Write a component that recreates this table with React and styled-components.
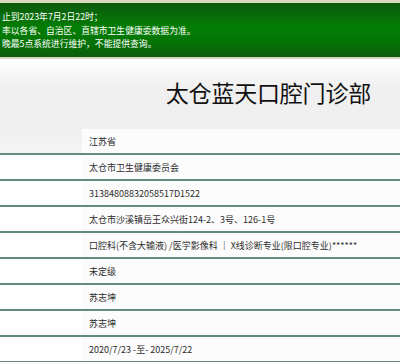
import styled, { createGlobalStyle } from "styled-components";

const Global = createGlobalStyle`
  body {
    margin: 0;
    background: #fff;
    font-family: "Noto Sans CJK SC", "Liberation Sans", sans-serif;
    color: #2b2b2b;
  }
`;

const Page = styled.div`
  width: 400px;
  overflow: hidden;
`;

const Notice = styled.div`
  height: 47px;
  border-top: 3px solid #d9d7bd;
  border-bottom: 2px solid #d9d7bd;
  background: linear-gradient(#0c590c, #047e04 45%, #067306 75%, #0f5b0f);
  padding: 7px 0 0 2px;
`;

const NoticeLine = styled.div`
  color: #fff;
  font-size: 8.8px;
  line-height: 13.6px;
  white-space: nowrap;
`;

const Head = styled.div`
  margin-top: 1px;
  background: linear-gradient(#fff 0px, #f7f7f7 12px, #efefef 30px, #f0f0f0 70px, #f4f4f4 95px);
`;

const Title = styled.div`
  height: 64px;
  padding: 0 29px 5px 0;
  display: flex;
  justify-content: flex-end;
  align-items: center;
  font-size: 23px;
  color: #111;
  letter-spacing: -0.2px;
`;

const Row = styled.div`
  display: flex;
  height: 24px;
  border-bottom: 2px solid #638b7f;
`;

const Label = styled.div`
  width: 82px;
  flex: none;
  background: ${(p) => (p.$first ? "transparent" : "#fff")};
`;

const Value = styled.div`
  flex: 1;
  background: #fcfcfc;
  padding-left: 7px;
  display: flex;
  align-items: center;
  font-size: 9px;
  white-space: nowrap;
`;

const Body = styled.div`
  background: #fff;
`;

const rows = [
  "江苏省",
  "太仓市卫生健康委员会",
  "313848088320585 17D1522".replace(" ", ""),
  "太仓市沙溪镇岳王众兴街124-2、3号、126-1号",
  "口腔科(不含大输液) /医学影像科 ｜ X线诊断专业(限口腔专业)******",
  "未定级",
  "苏志坤",
  "苏志坤",
  "2020/7/23 -至- 2025/7/22",
];

export default function App() {
  return (
    <Page>
      <Global />
      <Notice>
        <NoticeLine>止到2023年7月2日22时；</NoticeLine>
        <NoticeLine>率以各省、自治区、直辖市卫生健康委数据为准。</NoticeLine>
        <NoticeLine>晚最5点系统进行维护，不能提供查询。</NoticeLine>
      </Notice>
      <Head>
        <Title>太仓蓝天口腔门诊部</Title>
        <Row>
          <Label $first />
          <Value>{rows[0]}</Value>
        </Row>
      </Head>
      <Body>
        {rows.slice(1).map((r, i) => (
          <Row key={i}>
            <Label />
            <Value>{r}</Value>
          </Row>
        ))}
      </Body>
    </Page>
  );
}
